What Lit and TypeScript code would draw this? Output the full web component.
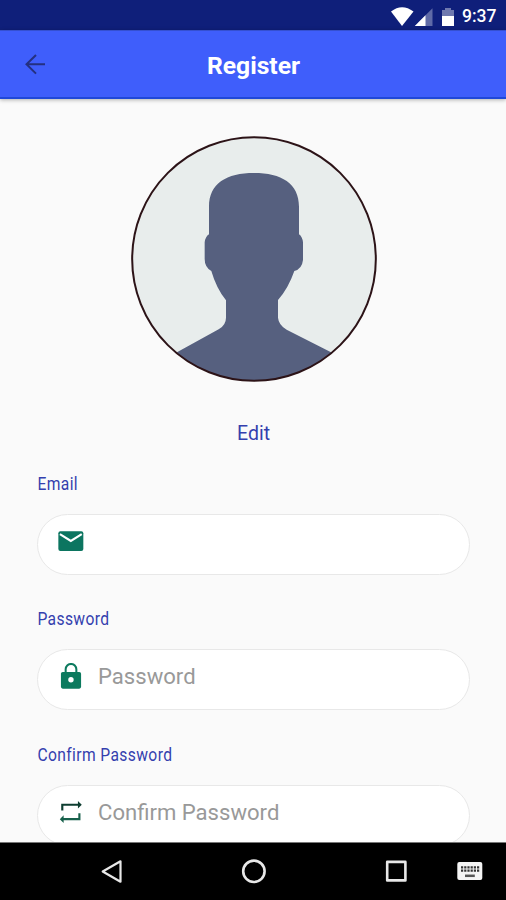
import { LitElement, html, css, svg } from "lit";
import { customElement, property } from "lit/decorators.js";

const icons = {
  mail: svg`<rect x="1.200" y="2.900" width="22.200" height="17.500" rx="1.800" fill="#0c7560"/><path fill="none" stroke="#fff" stroke-width="1.900" d="M2.600 5.400L12.300 11.500L22 5.400"/>`,
  lock: svg`<path fill="none" stroke="#0c7a5e" stroke-width="1.800" d="M7.700 9V5.600a4.750 4.750 0 0 1 9.500 0V9"/><rect x="3.500" y="7.900" width="17.900" height="14.900" rx="1.600" fill="#0c7a5e"/><circle cx="12.400" cy="14.900" r="2.400" fill="#fff"/>`,
  repeat: svg`<path fill="none" stroke="#0e3d30" stroke-width="1.900" d="M4.700 10.200V5.100H19.500"/><path fill="#0e3d30" d="M18.600 1.700l3.400 3.400-3.400 3.400z"/><path fill="none" stroke="#17604b" stroke-width="1.900" d="M19.900 12.700v5.200H5"/><path fill="#17604b" d="M5.900 14.500L2.500 17.900l3.400 3.400z"/>`,
};

@customElement("form-field")
class FormField extends LitElement {
  @property() label = "";
  @property() hint = "";
  @property() icon: keyof typeof icons = "mail";

  static styles = css`
    :host { display: block; height: 135.400px; flex: none; }
    .label {
      height: 24px; line-height: 24px; width: max-content; padding-left: .5px;
      font-size: 18.500px; color: #343fae; letter-spacing: .45px;
      transform: scaleX(.845); transform-origin: left;
    }
    .box {
      box-sizing: border-box; height: 61px; margin-top: 18px;
      border: 1.500px solid #e8e8e8; border-radius: 31px; background: #fff;
      display: flex; align-items: flex-start; padding: 13px 19px;
    }
    svg { width: 27px; height: 27px; flex: none; }
    .hint { margin-left: 14px; font-size: 22.100px; line-height: 27px; color: #999; white-space: nowrap; }
  `;

  render() {
    return html`
      <div class="label">${this.label}</div>
      <div class="box">
        <svg viewBox="0 0 24 24">${icons[this.icon]}</svg>
        <span class="hint">${this.hint}</span>
      </div>`;
  }
}

@customElement("app-root")
class AppRoot extends LitElement {
  static styles = css`
    :host {
      display: flex; flex-direction: column; width: 506px; height: 900px;
      overflow: hidden; background: #fafafa; font-family: Roboto, sans-serif;
    }
    svg { display: block; flex: none; }
    .status {
      height: 30px; flex: none; box-sizing: border-box; background: #0f1f7a;
      display: flex; align-items: center; justify-content: flex-end;
      padding: 2px 9px 0 0; color: #fff;
    }
    .time { font-size: 17.500px; font-weight: 500; line-height: 28px; margin-left: 7px; width: 35px; white-space: nowrap; }
    .bar {
      height: 69px; flex: none; box-sizing: border-box; background: #3f5efb;
      border-top: 1px solid #3550d0; border-bottom: 2px solid #2048d8;
      box-shadow: 0 1px 4px rgba(0, 0, 0, .3);
      display: grid; grid-template-columns: 60px 1fr 60px; align-items: center;
      position: relative;
    }
    .back { margin-left: 24px; }
    .title { text-align: center; color: #fff; font-size: 24.700px; font-weight: 700; line-height: 30px; padding: 3px 0 0 1px; }
    .content { flex: 1; min-height: 0; overflow: hidden; display: flex; flex-direction: column; padding: 37px 36px 0 37px; }
    .avatar { width: 246px; height: 246px; margin-left: 93.700px; }
    .edit { height: 24px; line-height: 24px; margin: 40px 0 26px; text-align: center; font-size: 19.500px; color: #343fae; }
    .nav { height: 58px; flex: none; box-sizing: border-box; background: #000; border-top: 1px solid #777; }
  `;

  render() {
    return html`
      <div class="status">
        <svg width="65" height="24" viewBox="0 0 65 24">
          <path fill="#fff" d="M1 7.500Q12 -1 23.500 7.500L12 22z"/>
          <path fill="#5f6aa7" d="M42.500 4.300v17.700h-17.700z"/>
          <path fill="#fff" d="M35.500 11.300v10.700H24.800z"/>
          <path fill="#6f79af" d="M52 6h3V4h6v2h3v6H52z"/>
          <path fill="#fff" d="M52 12h12v10H52z"/>
        </svg>
        <span class="time">9:37</span>
      </div>
      <div class="bar">
        <svg class="back" width="24" height="24" viewBox="0 0 24 24">
          <path fill="none" stroke="#243080" stroke-width="2" d="M21 12.300H2.500M12 3L2.500 12.300l9.500 9.300"/>
        </svg>
        <div class="title">Register</div>
      </div>
      <div class="content">
        <svg class="avatar" viewBox="33 33 738 738">
          <defs><clipPath id="disc"><circle cx="402" cy="402" r="366"/></clipPath></defs>
          <circle cx="402" cy="402" r="366" fill="#e8edec"/>
          <path clip-path="url(#disc)" fill="#56607f" d="M160 688L296 613Q318 600 318 578V526Q289 490 274 438Q254 427 254 402V352Q256 335 267 328V245C267 175 320 144 402 144S537 175 537 245V328Q547 335 549 352V405Q546 432 523 438Q505 490 474 525V578Q476 600 500 614L645 688V780H160z"/>
          <circle cx="402" cy="402" r="365.500" fill="none" stroke="#2c1317" stroke-width="6"/>
        </svg>
        <div class="edit">Edit</div>
        <form-field label="Email" icon="mail"></form-field>
        <form-field label="Password" hint="Password" icon="lock"></form-field>
        <form-field label="Confirm Password" hint="Confirm Password" icon="repeat"></form-field>
      </div>
      <div class="nav">
        <svg width="506" height="57" viewBox="0 843 506 57" fill="none" stroke="#e8e8e8">
          <path stroke-width="2.200" stroke-linejoin="round" d="M120.500 861.300v20.400L102.700 871.500z"/>
          <circle cx="253.900" cy="871.300" r="10.700" stroke-width="2.600"/>
          <path stroke-width="2.600" stroke-linejoin="round" d="M387.200 861.900h18.200v18.500h-18.200z"/>
          <rect x="457.300" y="862" width="25" height="18" rx="2" fill="#f4f4f4" stroke="none"/>
          <path stroke="#333" stroke-width="2.200" stroke-dasharray="2.200 1" d="M461 867.300h18.200M461 870.700h18.200"/>
          <path stroke="#555" stroke-width="2.500" d="M465 875.800h9.800"/>
        </svg>
      </div>`;
  }
}
